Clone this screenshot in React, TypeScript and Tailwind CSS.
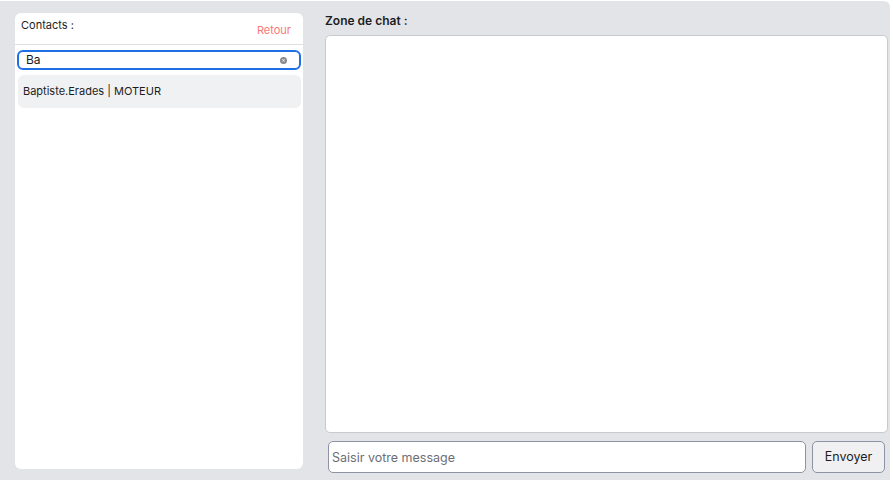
import React, { useState } from 'react';

const App: React.FC = () => {
  const [search, setSearch] = useState('Ba');
  const [message, setMessage] = useState('');

  return (
    <div className="h-[480px] w-full bg-white font-['Inter','Liberation_Sans',sans-serif] text-[#1d1d1f]">
      <div className="mt-px flex h-[479px] w-[890px] gap-[22px] rounded-tr-md bg-[#e3e4e8] pl-[15px] pt-[12px]">
        {/* Contacts */}
        <div className="mb-[11px] flex w-[288px] flex-col rounded-md bg-white">
          <div className="flex h-[32px] items-start justify-between border-b border-[#dfe0e4] px-[6px]">
            <span className="mt-[4px] text-[11px]">Contacts :</span>
            <button className="mt-[9px] mr-[6px] text-[11px] text-[#f87878]">Retour</button>
          </div>
          <div className="px-[2px] pt-[5px]">
            <div className="flex h-[20px] items-center rounded-md border-2 border-[#1f6fe5] pl-[7px] pr-[12px]">
              <input
                value={search}
                onChange={e => setSearch(e.target.value)}
                className="flex-1 bg-transparent text-[12px] outline-none"
              />
              <span className="flex h-[7px] w-[7px] items-center justify-center rounded-full bg-[#8a8a8e] text-[6px] leading-none text-white">×</span>
            </div>
            <div className="mt-[5px] ml-px flex h-[33px] items-center rounded-md bg-[#f0f1f3] px-[5px] text-[11px]">
              Baptiste.Erades | MOTEUR
            </div>
          </div>
        </div>

        {/* Chat */}
        <div className="mb-[7px] flex flex-1 flex-col pr-[2px]">
          <h2 className="text-[12px] leading-[16px] font-semibold">Zone de chat :</h2>
          <div className="mt-[6px] flex-1 rounded-[5px] border border-[#c9cad0] bg-white"></div>
          <div className="mt-[8px] flex gap-[6px] pl-[3px] pr-[3px]">
            <input
              value={message}
              onChange={e => setMessage(e.target.value)}
              placeholder="Saisir votre message"
              className="h-[32px] flex-1 rounded-[5px] border border-[#8e93a3] bg-white px-[3px] text-[12.5px] outline-none placeholder:text-[#6b6e76]"
            />
            <button className="h-[32px] w-[73px] rounded-[5px] border border-[#8e93a3] bg-[#f0f0f2] text-[12.5px]">
              Envoyer
            </button>
          </div>
        </div>
      </div>
    </div>
  );
};

export default App;
